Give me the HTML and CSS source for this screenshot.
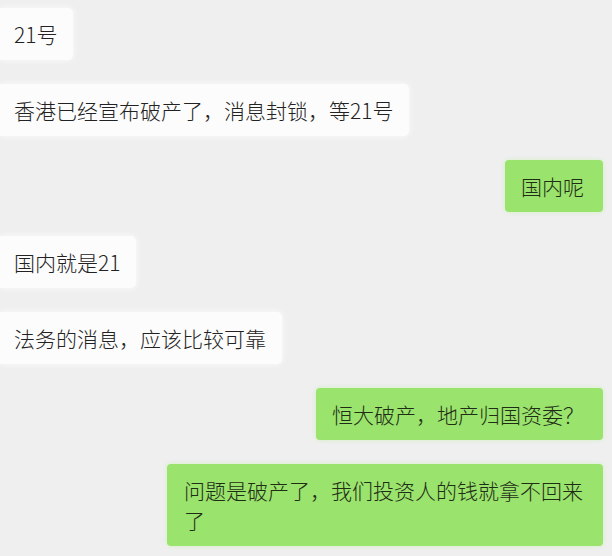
FILE: index.html
```html
<!DOCTYPE html>
<html lang="zh-CN">
<head>
    <meta charset="UTF-8">
    <meta name="viewport" content="width=device-width, initial-scale=1.0">
    <title>聊天记录</title>
    <link rel="stylesheet" href="styles.css">
</head>
<body>
    <div class="chat">
        <div class="msg left"><div class="bubble">21号</div></div>
        <div class="msg left"><div class="bubble">香港已经宣布破产了，消息封锁，等21号</div></div>
        <div class="msg right"><div class="bubble">国内呢</div></div>
        <div class="msg left"><div class="bubble">国内就是21</div></div>
        <div class="msg left"><div class="bubble">法务的消息，应该比较可靠</div></div>
        <div class="msg right"><div class="bubble">恒大破产，地产归国资委？</div></div>
        <div class="msg right"><div class="bubble wide">问题是破产了，我们投资人的钱就拿不回来了</div></div>
    </div>
</body>
</html>
```

FILE: styles.css
```css
body {
    margin: 0;
    background: #efefef;
    font-family: "Noto Sans CJK SC", "Noto Sans", sans-serif;
    font-weight: 300;
    color: #222222;
    width: 612px;
    height: 556px;
    overflow: hidden;
}

.chat {
    display: flex;
    flex-direction: column;
    gap: 24px;
    padding: 8px 9px 0 0;
}

.msg {
    display: flex;
}

.msg.left {
    justify-content: flex-start;
}

.msg.right {
    justify-content: flex-end;
}

.bubble {
    font-size: 21px;
    line-height: 30px;
    padding: 11px 16px 11px 14px;
    border-radius: 0 5px 5px 0;
    background: #fcfcfc;
    box-shadow: 0 0 6px rgba(255, 255, 255, 0.9);
}

.right .bubble {
    background: #9ae36c;
    color: #1f2d17;
    padding: 11px 19px 11px 16px;
    border-radius: 4px;
    box-shadow: 0 0 4px rgba(200, 240, 180, 0.8);
}

.bubble.wide {
    box-sizing: border-box;
    max-width: 436px;
    padding-left: 17px;
}
```
